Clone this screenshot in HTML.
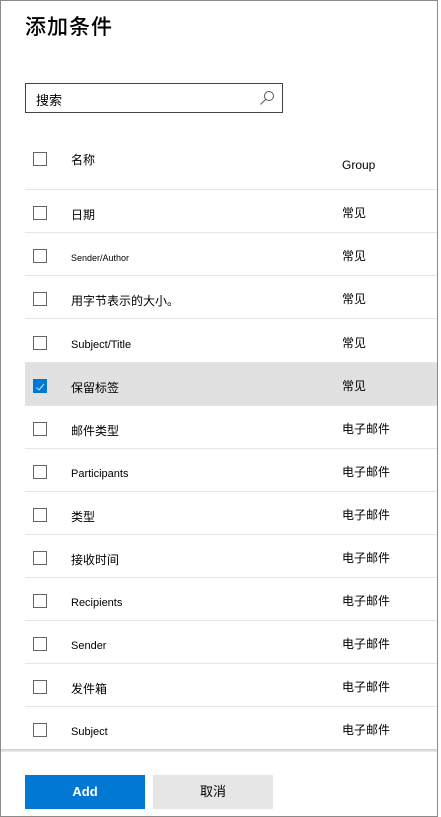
<!DOCTYPE html>
<html><head><meta charset="utf-8"><style>
body{margin:0;width:441px;height:817px;overflow:hidden;background:#fff;font-family:"Liberation Sans","Noto Sans CJK SC",sans-serif;color:#000;position:relative}
.frame{position:absolute;left:0;top:0;width:436px;height:815px;border:1px solid #8a8a8a}
h1{position:absolute;left:25px;top:11px;margin:0;font-size:21px;font-weight:500;letter-spacing:1px;font-family:"Noto Sans CJK SC",sans-serif}
.search{position:absolute;left:25px;top:83px;width:258px;height:30px;border:1px solid #444;box-sizing:border-box}
.search span{position:absolute;left:10px;top:6px;font-size:13px}
.search svg{position:absolute;right:7px;top:6px}
.row{position:absolute;left:25px;width:412px;height:42px;border-bottom:1px solid #e6e6e6}
.cb{position:absolute;left:8px;top:16px;width:12px;height:12px;border:1px solid #666}
.n{position:absolute;left:46px;top:2px;line-height:46px;font-size:12px}
.g{position:absolute;left:317px;top:0;line-height:46px;font-size:12px}
.sel{background:#e1e1e1}
.sel .cb{background:#0078d4;border-color:#0078d4}
.foot{position:absolute;left:1px;top:749px;width:436px;height:3px;background:linear-gradient(#ccc,#eee)}
.btn{position:absolute;top:775px;height:34px;width:120px;text-align:center;line-height:34px;font-size:13px}
</style></head><body>
<div class="frame"></div>
<h1>添加条件</h1>
<div class="search"><span>搜索</span><svg width="16" height="16" viewBox="0 0 16 16"><circle cx="10" cy="6" r="4.5" fill="none" stroke="#555" stroke-width="1"/><path d="M7 9L1.5 14.5" stroke="#555" stroke-width="1"/></svg></div>
<div class="row" style="top:147px"><div class="cb" style="top:5px"></div><div class="n" style="line-height:26px;top:0">名称</div><div class="g" style="top:8px;line-height:20px;font-size:12px">Group</div></div>
<div class="row" style="top:190px"><div class="cb"></div><div class="n">日期</div><div class="g">常见</div></div>
<div class="row" style="top:233px"><div class="cb"></div><div class="n" style="font-size:9px">Sender/Author</div><div class="g">常见</div></div>
<div class="row" style="top:276px"><div class="cb"></div><div class="n">用字节表示的大小。</div><div class="g">常见</div></div>
<div class="row" style="top:320px"><div class="cb"></div><div class="n" style="font-size:11px">Subject/Title</div><div class="g">常见</div></div>
<div class="row sel" style="top:363px"><div class="cb"><svg width="12" height="12" viewBox="0 0 12 12"><path d="M2.5 6.5L5 9L10 3" stroke="#cfe3f7" stroke-width="1" fill="none"/></svg></div><div class="n">保留标签</div><div class="g">常见</div></div>
<div class="row" style="top:406px"><div class="cb"></div><div class="n">邮件类型</div><div class="g">电子邮件</div></div>
<div class="row" style="top:449px"><div class="cb"></div><div class="n" style="font-size:11px">Participants</div><div class="g">电子邮件</div></div>
<div class="row" style="top:492px"><div class="cb"></div><div class="n">类型</div><div class="g">电子邮件</div></div>
<div class="row" style="top:535px"><div class="cb"></div><div class="n">接收时间</div><div class="g">电子邮件</div></div>
<div class="row" style="top:578px"><div class="cb"></div><div class="n" style="font-size:11px">Recipients</div><div class="g">电子邮件</div></div>
<div class="row" style="top:621px"><div class="cb"></div><div class="n" style="font-size:11px">Sender</div><div class="g">电子邮件</div></div>
<div class="row" style="top:664px"><div class="cb"></div><div class="n">发件箱</div><div class="g">电子邮件</div></div>
<div class="row" style="top:707px"><div class="cb"></div><div class="n" style="font-size:11px">Subject</div><div class="g">电子邮件</div></div>
<div class="foot"></div>
<div class="btn" style="left:25px;background:#0078d4;color:#fff;font-weight:bold">Add</div>
<div class="btn" style="left:153px;background:#e6e6e6">取消</div>
</body></html>
